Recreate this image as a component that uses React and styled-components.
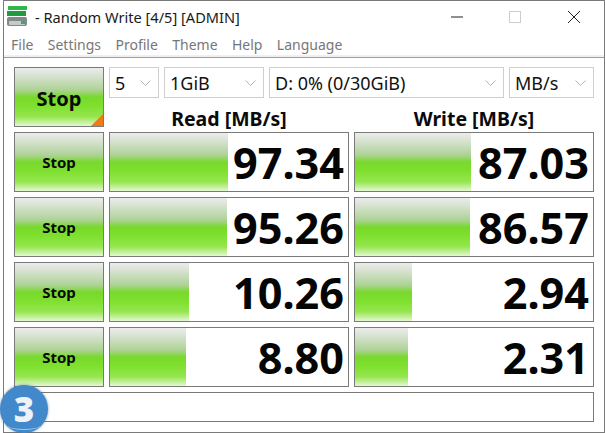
import React from 'react';
import styled, { createGlobalStyle } from 'styled-components';

const GlobalStyle = createGlobalStyle`
  html, body {
    margin: 0;
    padding: 0;
    background: #fff;
  }
  body {
    font-family: "Noto Sans", "Open Sans", sans-serif;
  }
`;

const greenFill = `linear-gradient(
  180deg,
  #ececec 0%,
  #d6e2d0 14%,
  #aed296 38%,
  #78d92c 50%,
  #7fe02f 66%,
  #96e64f 84%,
  #e4f7d3 100%
)`;

const Screen = styled.div`
  position: relative;
  width: 605px;
  height: 433px;
  overflow: hidden;
  background: #fff;
`;

const Window = styled.div`
  box-sizing: border-box;
  width: 602px;
  height: 433px;
  margin-left: 3px;
  border: 1px solid #7a7a7a;
  display: flex;
  flex-direction: column;
`;

const TitleBar = styled.div`
  height: 31px;
  display: flex;
  align-items: center;
  padding-left: 3px;
`;

const Title = styled.div`
  margin-left: 7px;
  flex: 1;
  font-size: 14.6px;
  color: #1a1a1a;
  white-space: nowrap;
`;

const WinButton = styled.div`
  width: 46px;
  height: 31px;
  margin-right: ${(p) => p.$gap}px;
  display: flex;
  align-items: center;
  justify-content: center;
`;

const Menu = styled.div`
  height: 25px;
  display: flex;
  align-items: center;
  gap: 14.4px;
  padding-left: 7px;
  font-size: 14px;
  color: #777;
  border-bottom: 1px solid #a0a0a0;
  box-shadow: inset 0 -2px 0 #f0f0f0;
`;

const Board = styled.div`
  flex: 1;
  padding: 9px 10px 0;
  display: grid;
  grid-template-columns: 90px 240px 240px;
  grid-template-rows: 60px 60px 60px 60px 60px 30px;
  gap: 5px;
`;

const MainButton = styled.div`
  position: relative;
  box-sizing: border-box;
  border: 1px solid #7a7a7a;
  background: ${greenFill};
  display: flex;
  align-items: center;
  justify-content: center;
  padding: ${(p) => (p.$main ? '2px 0 0' : '0 0 1px')};
  font-size: ${(p) => (p.$main ? 20 : 15)}px;
  font-weight: 700;
  color: #0a0a0a;
  overflow: hidden;
`;

const Corner = styled.span`
  position: absolute;
  right: 0;
  bottom: 0;
  border-style: solid;
  border-width: 0 0 12px 12px;
  border-color: transparent transparent #f07a14 transparent;
`;

const TopControls = styled.div`
  grid-column: 2 / 4;
  display: flex;
  flex-direction: column;
`;

const Selects = styled.div`
  display: flex;
  gap: 5px;
  flex: 0 0 31px;
`;

const Select = styled.div`
  box-sizing: border-box;
  width: ${(p) => p.$w}px;
  border: 1px solid #cfcfcf;
  display: flex;
  align-items: center;
  justify-content: space-between;
  padding: 0 7px 0 5px;
  font-size: 18px;
  color: #111;
`;

const Heads = styled.div`
  flex: 1;
  min-height: 0;
  display: grid;
  grid-template-columns: 240px 240px;
  gap: 5px;
`;

const Head = styled.div`
  text-align: center;
  font-size: 19.5px;
  font-weight: 700;
  line-height: 24px;
  padding-top: 9px;
  color: #0a0a0a;
`;

const Meter = styled.div`
  position: relative;
  box-sizing: border-box;
  border: 1px solid #7a7a7a;
  display: flex;
  align-items: center;
  justify-content: flex-end;
  padding: 1px 4px 0 0;
`;

const Bar = styled.div`
  position: absolute;
  left: 0;
  top: 0;
  bottom: 0;
  background: ${greenFill};
`;

const Value = styled.span`
  position: relative;
  font-size: 43.2px;
  line-height: 57px;
  font-weight: 700;
  color: #050505;
`;

const Status = styled.div`
  grid-column: 1 / 4;
  box-sizing: border-box;
  border: 1px solid #7a7a7a;
`;

const Badge = styled.div`
  position: absolute;
  left: 0;
  top: 385px;
  width: 48px;
  height: 48px;
  border-radius: 50%;
  background: #4189cb;
  box-shadow: 0 0 3px rgba(40, 80, 120, 0.6);
  display: flex;
  align-items: center;
  justify-content: center;
  font-family: "Open Sans", sans-serif;
  font-size: 35px;
  line-height: 48px;
  font-weight: 800;
  color: #eef2f7;

  &::after {
    content: '';
    position: absolute;
    left: 8px;
    right: 8px;
    bottom: 3px;
    height: 8px;
    border-bottom: 1px solid #9cc6ea;
    border-radius: 0 0 50% 50%;
  }
`;

const Chevron = () => (
  <svg width="11" height="6" viewBox="0 0 11 6" fill="none" stroke="#b4b4b4">
    <path d="M0.5 0.5 L5.5 5.5 L10.5 0.5" />
  </svg>
);

const AppIcon = () => (
  <svg width="21" height="22" viewBox="0 0 21 22">
    <rect x="1" y="0" width="19" height="4" fill="#2fb84a" />
    <rect x="0" y="5" width="19" height="5" fill="#1f9c3c" />
    <rect x="0" y="11" width="20" height="9" rx="2" fill="#7e8b87" />
    <rect x="2" y="15" width="16" height="4" rx="1" fill="#c4cbc8" />
    <rect x="14" y="15" width="4" height="3" fill="#4aa070" />
  </svg>
);

const rows = [
  { read: '97.34', readBar: 118, write: '87.03', writeBar: 116 },
  { read: '95.26', readBar: 117, write: '86.57', writeBar: 115 },
  { read: '10.26', readBar: 79, write: '2.94', writeBar: 57 },
  { read: '8.80', readBar: 76, write: '2.31', writeBar: 53 },
];

const menuItems = ['File', 'Settings', 'Profile', 'Theme', 'Help', 'Language'];

const App = () => (
  <Screen>
    <GlobalStyle />
    <Window>
      <TitleBar>
        <AppIcon />
        <Title>- Random Write [4/5] [ADMIN]</Title>
        <WinButton $gap={12}>
          <svg width="12" height="2"><rect width="12" height="1" y="0.5" fill="#222" /></svg>
        </WinButton>
        <WinButton $gap={13}>
          <svg width="12" height="12" fill="none" stroke="#ccc"><rect x="0.5" y="0.5" width="11" height="11" /></svg>
        </WinButton>
        <WinButton $gap={7}>
          <svg width="14" height="14" stroke="#222"><path d="M1 1 L13 13 M13 1 L1 13" /></svg>
        </WinButton>
      </TitleBar>
      <Menu>
        {menuItems.map((item) => <span key={item}>{item}</span>)}
      </Menu>
      <Board>
        <MainButton $main>
          Stop
          <Corner />
        </MainButton>
        <TopControls>
          <Selects>
            <Select $w={50}>5<Chevron /></Select>
            <Select $w={100}>1GiB<Chevron /></Select>
            <Select $w={235}>D: 0% (0/30GiB)<Chevron /></Select>
            <Select $w={85}>MB/s<Chevron /></Select>
          </Selects>
          <Heads>
            <Head>Read [MB/s]</Head>
            <Head>Write [MB/s]</Head>
          </Heads>
        </TopControls>
        {rows.map((row) => (
          <React.Fragment key={row.read}>
            <MainButton>Stop</MainButton>
            <Meter>
              <Bar style={{ width: row.readBar }} />
              <Value>{row.read}</Value>
            </Meter>
            <Meter>
              <Bar style={{ width: row.writeBar }} />
              <Value>{row.write}</Value>
            </Meter>
          </React.Fragment>
        ))}
        <Status />
      </Board>
    </Window>
    <Badge>3</Badge>
  </Screen>
);

export default App;
